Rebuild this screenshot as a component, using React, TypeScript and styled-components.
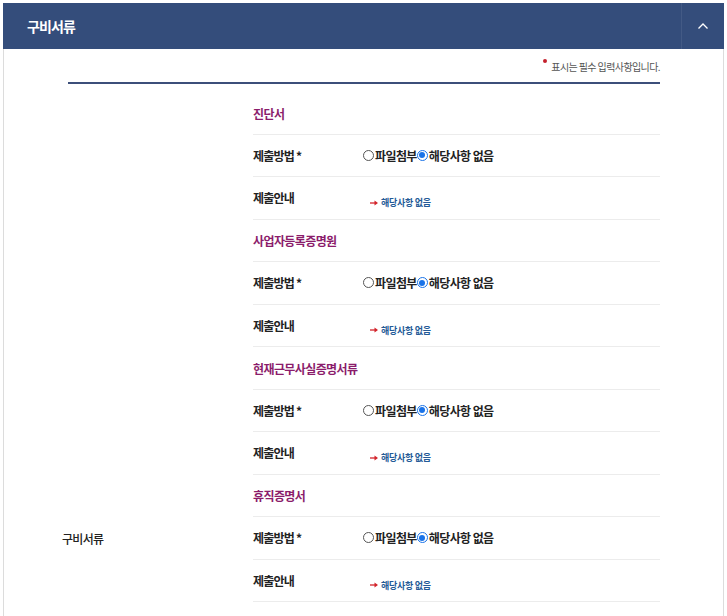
import React from "react";
import styled, { createGlobalStyle } from "styled-components";

const GlobalStyle = createGlobalStyle`
  html, body { margin: 0; padding: 0; background: #fff; }
  body { font-family: "Noto Sans CJK KR", "Noto Sans", sans-serif; color: #222; }
  * { box-sizing: border-box; }
`;

const Page = styled.div`
  padding: 3px 3px 0 3px;
`;

const Header = styled.div`
  height: 46px;
  background: #344d7b;
  display: flex;
  align-items: center;
  justify-content: space-between;
`;

const HeaderTitle = styled.h2`
  margin: 0;
  padding-left: 24px;
  color: #fff;
  font-size: 14px;
  font-weight: 700;
  letter-spacing: -0.9px;
`;

const ToggleButton = styled.button`
  width: 43px;
  height: 100%;
  border: 0;
  border-left: 1px solid rgba(255, 255, 255, 0.08);
  background: transparent;
  display: flex;
  align-items: center;
  justify-content: center;
  padding: 0;
  cursor: pointer;
`;

const Body = styled.div`
  border: 1px solid #dcdcdc;
  border-top: 0;
  padding: 7px 63px 0 64px;
`;

const Note = styled.p`
  margin: 0;
  text-align: right;
  font-size: 10px;
  letter-spacing: -0.6px;
  color: #555;
  line-height: 16px;
  height: 26px;
  padding-top: 3px;
`;

const Dot = styled.span`
  display: inline-block;
  width: 4px;
  height: 4px;
  border-radius: 50%;
  background: #c4202c;
  vertical-align: 8px;
  margin-right: 4px;
`;

const Table = styled.div`
  border-top: 2px solid #3c4f7a;
`;

const Grid = styled.div`
  display: grid;
  grid-template-columns: 191px 1fr;
  margin-left: -6px;
  padding-top: 8px;
`;

const RowHead = styled.div`
  display: flex;
  align-items: center;
  font-size: 12px;
  font-weight: 500;
  letter-spacing: -0.7px;
  color: #222;
`;

const Groups = styled.div`
  display: flex;
  flex-direction: column;
`;

const Row = styled.div`
  height: 42.5px;
  border-bottom: 1px solid #ececec;
  display: flex;
  align-items: center;
`;

const SectionTitle = styled.div`
  font-size: 12px;
  font-weight: 700;
  letter-spacing: -0.6px;
  color: #8b1c6b;
  padding-top: 1px;
`;

const FieldLabel = styled.div`
  width: 110px;
  flex: none;
  font-size: 12px;
  font-weight: 700;
  letter-spacing: -0.8px;
  color: #222;
`;

const RadioGroup = styled.div`
  display: flex;
  align-items: center;
  font-size: 12px;
  font-weight: 700;
  letter-spacing: -0.6px;
  color: #222;
`;

const RadioLabel = styled.label`
  display: inline-flex;
  align-items: center;
`;

const RadioMark = styled.span<{ $checked?: boolean }>`
  width: 11px;
  height: 11px;
  border-radius: 50%;
  border: 1px solid ${(p) => (p.$checked ? "#1a73e8" : "#555")};
  background: #fff;
  display: inline-flex;
  align-items: center;
  justify-content: center;
  margin-right: 1px;
  &::after {
    content: "";
    display: ${(p) => (p.$checked ? "block" : "none")};
    width: 6px;
    height: 6px;
    border-radius: 50%;
    background: #1a73e8;
  }
`;

const Guide = styled.div`
  display: flex;
  align-items: center;
  padding-left: 7px;
  padding-top: 10px;
  font-size: 9px;
  font-weight: 700;
  letter-spacing: -0.3px;
  color: #245a97;
`;

const Arrow = () => (
  <svg width="8" height="6" viewBox="0 0 8 6" style={{ marginRight: 3 }}>
    <path d="M0 3h5.5" stroke="#d2232a" strokeWidth="1.3" />
    <path d="M4.5 0.5 L8 3 L4.5 5.5 Z" fill="#d2232a" />
  </svg>
);

const Chevron = () => (
  <svg width="12" height="8" viewBox="0 0 12 8">
    <path d="M1.5 6.5 L6 2 L10.5 6.5" stroke="#fff" strokeWidth="1.3" fill="none" />
  </svg>
);

const docs = [
  "진단서",
  "사업자등록증명원",
  "현재근무사실증명서류",
  "휴직증명서",
  "가족관계증명서",
  "재직증명서",
  "기타서류",
];

const DocGroup = ({ title }: { title: string }) => (
  <>
    <Row>
      <SectionTitle>{title}</SectionTitle>
    </Row>
    <Row>
      <FieldLabel>제출방법 *</FieldLabel>
      <RadioGroup>
        <RadioLabel>
          <RadioMark />
          파일첨부
        </RadioLabel>
        <RadioLabel>
          <RadioMark $checked />
          해당사항 없음
        </RadioLabel>
      </RadioGroup>
    </Row>
    <Row>
      <FieldLabel>제출안내</FieldLabel>
      <Guide>
        <Arrow />
        해당사항 없음
      </Guide>
    </Row>
  </>
);

export default function App() {
  return (
    <Page>
      <GlobalStyle />
      <Header>
        <HeaderTitle>구비서류</HeaderTitle>
        <ToggleButton aria-label="접기">
          <Chevron />
        </ToggleButton>
      </Header>
      <Body>
        <Note>
          <Dot />
          표시는 필수 입력사항입니다.
        </Note>
        <Table>
          <Grid>
            <RowHead>구비서류</RowHead>
            <Groups>
              {docs.map((d) => (
                <DocGroup key={d} title={d} />
              ))}
            </Groups>
          </Grid>
        </Table>
      </Body>
    </Page>
  );
}
